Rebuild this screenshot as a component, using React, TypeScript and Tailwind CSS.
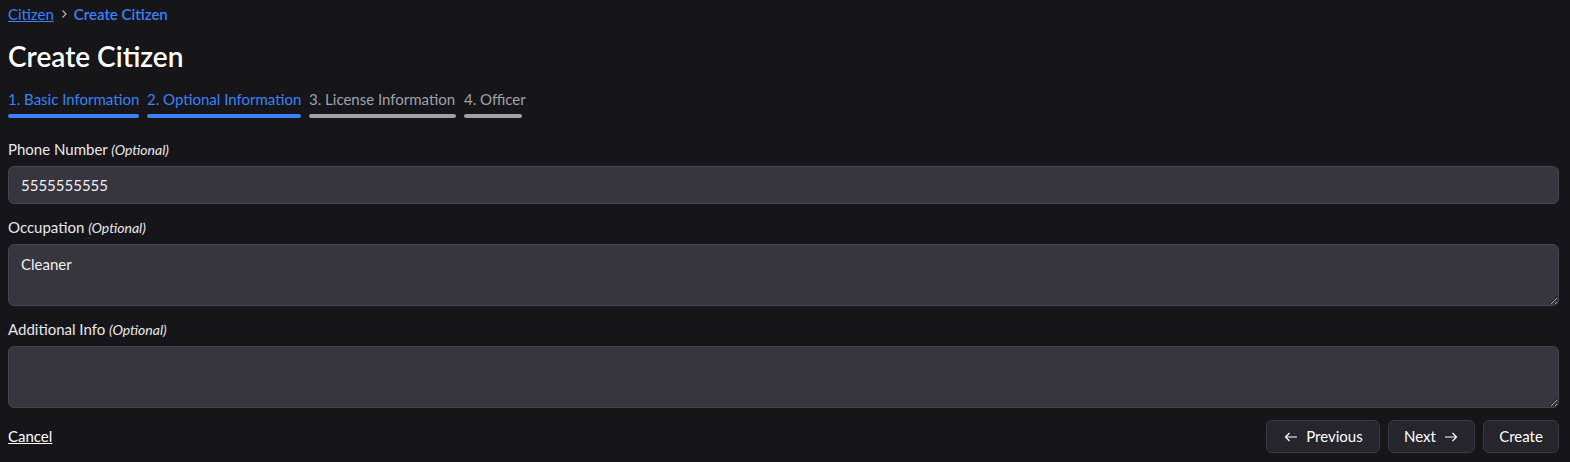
import React from "react";

const font = { fontFamily: "Lato, 'Noto Sans', sans-serif" };

function Label({ text }: { text: string }) {
  return (
    <div className="text-[15px] leading-5 text-[#e8e8ea] mb-[6px]">
      {text} <span className="italic text-[14px]">(Optional)</span>
    </div>
  );
}

export default function App() {
  const steps = [
    { t: "1. Basic Information", w: "w-[131px]", active: true },
    { t: "2. Optional Information", w: "w-[154px]", active: true },
    { t: "3. License Information", w: "w-[147px]", active: false },
    { t: "4. Officer", w: "w-[58px]", active: false },
  ];
  return (
    <div className="min-h-[462px] w-full bg-[#16151a] pl-2 pr-[11px] pt-[4px] text-white" style={font}>
      <div className="flex items-center gap-[4px] text-[15px] leading-5">
        <a className="underline text-[#3b82f6]">Citizen</a>
        <svg width="12" height="10" viewBox="0 0 12 10" className="text-[#b0b0b5]">
          <path d="M4.5 1.5 L8 5 L4.5 8.5" fill="none" stroke="currentColor" strokeWidth="1.2" />
        </svg>
        <span className="font-semibold text-[#3b82f6]">Create Citizen</span>
      </div>
      <h1 className="mt-[16px] text-[28px] leading-8 font-semibold text-white">Create Citizen</h1>
      <div className="mt-[17px] flex gap-2">
        {steps.map((s) => (
          <div key={s.t} className={`${s.w} flex flex-col`}>
            <span className={`text-[15px] leading-5 whitespace-nowrap ${s.active ? "text-[#3b82f6]" : "text-[#a1a1aa]"}`}>{s.t}</span>
            <div className={`mt-[5px] h-[4px] rounded-full ${s.active ? "bg-[#3b82f6]" : "bg-[#a1a1aa]"}`} />
          </div>
        ))}
      </div>
      <div className="mt-[21px]">
        <Label text="Phone Number" />
        <div className="h-[38px] rounded-md border border-[#46454d] bg-[#37363f] px-3 flex items-center text-[15px] text-[#f0f0f2]">
          5555555555
        </div>
      </div>
      <div className="mt-[13px]">
        <Label text="Occupation" />
        <textarea
          defaultValue="Cleaner"
          className="block w-full h-[62px] rounded-md border border-[#46454d] bg-[#37363f] px-3 py-[8px] text-[15px] text-[#f0f0f2] outline-none"
          style={font}
        />
      </div>
      <div className="mt-[13px]">
        <Label text="Additional Info" />
        <textarea
          className="block w-full h-[62px] rounded-md border border-[#46454d] bg-[#37363f] px-3 py-[8px] text-[15px] text-[#f0f0f2] outline-none"
          style={font}
        />
      </div>
      <div className="mt-[12px] flex items-center justify-between">
        <a className="underline text-[15px] text-white">Cancel</a>
        <div className="flex gap-2">
          <button className="h-[33px] w-[114px] flex items-center justify-center gap-[7px] rounded-md border border-[#3a3940] bg-[#26252b] text-[15px] text-white">
            <svg width="16" height="16" viewBox="0 0 16 16"><path d="M14 8H2.5M6.5 4L2.5 8l4 4" fill="none" stroke="currentColor" strokeWidth="1.2" /></svg>
            Previous
          </button>
          <button className="h-[33px] w-[87px] flex items-center justify-center gap-[7px] rounded-md border border-[#3a3940] bg-[#26252b] text-[15px] text-white">
            Next
            <svg width="16" height="16" viewBox="0 0 16 16"><path d="M2 8h11.5M9.5 4l4 4-4 4" fill="none" stroke="currentColor" strokeWidth="1.2" /></svg>
          </button>
          <button className="h-[33px] w-[76px] flex items-center justify-center rounded-md border border-[#3a3940] bg-[#26252b] text-[15px] text-white">
            Create
          </button>
        </div>
      </div>
    </div>
  );
}
